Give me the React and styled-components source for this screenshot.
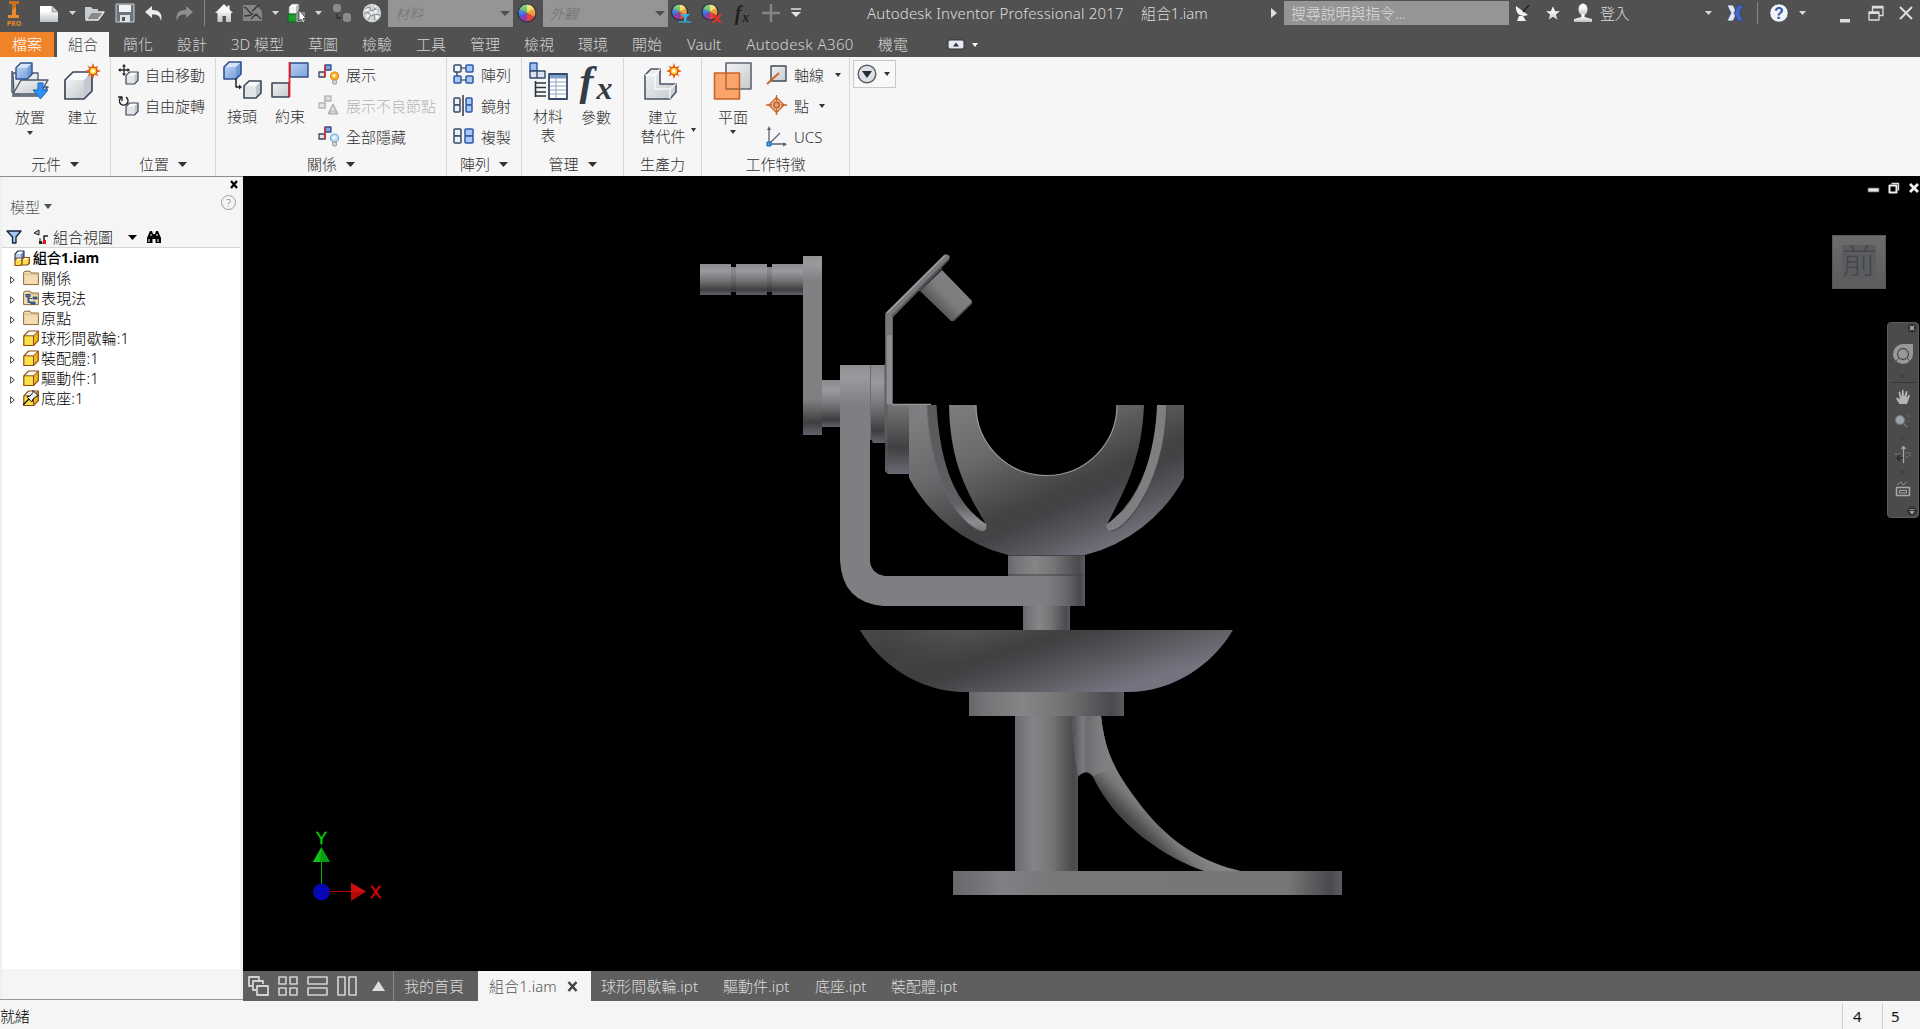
import React from 'react';
import styled, { createGlobalStyle } from 'styled-components';

const Global = createGlobalStyle`
  html, body { margin: 0; padding: 0; height: 100%; overflow: hidden; background: #f5f5f5; }
  *, *::before, *::after { box-sizing: border-box; }
  body { font-family: "Noto Sans", "Noto Sans CJK TC Light", "Noto Sans CJK TC", sans-serif; font-size: 15px; font-weight: 300; }
  svg { display: block; flex: none; }
`;

/* ---------- frame ---------- */
const Window = styled.div`
  width: 1920px; height: 1029px; display: flex; flex-direction: column; background: #f5f5f5; overflow: hidden;
`;
const TitleBar = styled.header`
  height: 28px; flex: none; display: flex; align-items: flex-start; background: #515151; color: #dcdcdc;
`;
const Slot = styled.div`
  width: ${(p) => p.$w}px; height: 26px; margin-left: ${(p) => p.$ml || 0}px; flex: none;
  display: flex; align-items: center; justify-content: center;
`;
const BarDivider = styled.div`
  width: 1px; height: ${(p) => p.$h || 26}px; margin-left: ${(p) => p.$ml}px; margin-top: ${(p) => p.$mt || 0}px; background: #858585; flex: none;
`;
const Combo = styled.div`
  width: ${(p) => p.$w}px; height: 27px; margin-left: ${(p) => p.$ml}px; padding: 0 3px 0 7px; background: #959595; color: #717171;
  display: flex; align-items: center; justify-content: space-between; font-style: italic; font-size: 14px; line-height: 26px; flex: none;
`;
const Caption = styled.div`
  width: ${(p) => p.$w}px; margin-left: ${(p) => p.$ml}px; line-height: 27px; height: 27px; font-size: 15px; color: #dedede;
  letter-spacing: ${(p) => p.$ls || 0}px; white-space: nowrap; flex: none;
`;
const Search = styled.div`
  width: 225px; height: 24px; margin: 1px 0 0 7px; padding-left: 7px; background: #959595; color: #dedede; font-size: 15px; line-height: 24px;
  white-space: nowrap; flex: none; letter-spacing: -0.15px;
`;
const TabBar = styled.nav`
  height: 29px; flex: none; display: flex; align-items: flex-end; background: #515151; color: #d4d4d4;
`;
const Tab = styled.div`
  width: ${(p) => p.$w}px; height: 25px; flex: none; text-align: center; line-height: 25px; white-space: nowrap;
  letter-spacing: ${(p) => p.$ls || 0}px;
  margin-left: ${(p) => p.$ml || 0}px;
  background: ${(p) => (p.$kind === 'file' ? '#f08228' : p.$kind === 'active' ? '#f6f6f6' : 'transparent')};
  color: ${(p) => (p.$kind === 'file' ? '#fff' : p.$kind === 'active' ? '#444' : 'inherit')};
`;
const TabTools = styled.div`
  height: 25px; display: flex; align-items: center; gap: 7px; margin-left: 27px;
`;

/* ---------- ribbon ---------- */
const Ribbon = styled.section`
  height: 119px; flex: none; display: flex; background: #f6f6f6; padding-top: 1px; color: #303030;
`;
const Panel = styled.div`
  width: ${(p) => p.$w}px; height: 118px; flex: none; display: flex; flex-direction: column; border-right: 1px solid #d6d6d6;
`;
const PanelBody = styled.div`
  height: 95px; display: flex; padding-left: ${(p) => p.$pl || 0}px;
`;
const PanelTitle = styled.div`
  height: 22px; display: flex; align-items: center; justify-content: center; gap: 9px; line-height: 20px;
`;
const Big = styled.div`
  width: ${(p) => p.$w}px; flex: none; padding-top: 3px; display: flex; flex-direction: column; align-items: center;
`;
const BigLabel = styled.div`
  margin-top: ${(p) => p.$mt || 5}px; line-height: ${(p) => p.$lh || 20}px; text-align: center; white-space: pre; color: #303030;
`;
const BigCaret = styled.div`
  margin-top: ${(p) => p.$mt}px;
`;
const Column = styled.div`
  display: flex; flex-direction: column; padding: 1px 0 0 ${(p) => p.$pl || 0}px;
`;
const Command = styled.div`
  height: 31px; display: flex; align-items: center; gap: ${(p) => p.$gap || 7}px; line-height: 20px; white-space: nowrap;
  color: ${(p) => (p.$off ? '#b4b4b4' : '#303030')};
`;
const TailCaret = styled.div`margin-left: ${(p) => p.$ml}px;`;
const DropButton = styled.div`
  width: 43px; height: 28px; margin: 2px 0 0 3px; border: 1px solid #c8c8c8; background: #f8f8f8;
  display: flex; align-items: center; justify-content: space-between; padding: 0 5px 0 3px;
`;

/* ---------- browser ---------- */
const Main = styled.main`flex: 1; display: flex; min-height: 0;`;
const Browser = styled.aside`
  width: 243px; height: 824px; flex: none; display: flex; flex-direction: column; padding: 0 3px 0 2px; background: #efefef;
  border-top: 1px solid #8f8f8f; border-bottom: 1px solid #999;
`;
const BrowserHead = styled.div`
  height: 71px; flex: none; background: #f5f5f5; border-bottom: 1px solid #d6d6d6; display: flex; flex-direction: column;
`;
const CloseLine = styled.div`height: 14px; flex: none; padding: 3px 2px 0 0; display: flex; justify-content: flex-end;`;
const ModelLine = styled.div`
  height: 30px; flex: none; padding: 0 4px 0 8px; display: flex; align-items: center; color: #555;
`;
const HelpMark = styled.div`
  margin: -7px 0 0 auto; width: 15px; height: 15px; border: 1px solid #9b9b9b; border-radius: 50%; font-size: 11px; line-height: 13px; text-align: center; color: #808080;
`;
const FilterLine = styled.div`
  height: 20px; margin-top: 6px; flex: none; padding-left: 4px; display: flex; align-items: center; color: #222; line-height: 20px;
`;
const Gap = styled.div`width: ${(p) => p.$w}px; flex: none;`;
const Tree = styled.div`height: 721px; background: #fff; color: #000;`;
const TreeRow = styled.div`
  height: 20px; display: flex; align-items: center; line-height: 20px;
  font-weight: ${(p) => (p.$root ? 700 : 300)}; font-size: ${(p) => (p.$root ? 14 : 15)}px;
  padding-left: ${(p) => (p.$root ? 12 : 8)}px; gap: ${(p) => (p.$root ? 3 : 0)}px; letter-spacing: ${(p) => (p.$root ? 0 : 0.15)}px;
`;
const Twist = styled.div`width: 13px; flex: none; padding-top: 3px;`;
const NodeIcon = styled.div`width: 18px; flex: none;`;
const BrowserFoot = styled.div`flex: 1; background: #f5f5f5;`;

/* ---------- viewport ---------- */
const Work = styled.section`flex: 1; display: flex; flex-direction: column;`;
const Canvas = styled.div`position: relative; height: 795px; background: #000; overflow: hidden;`;
const Model = styled.svg`position: absolute; left: 0; top: 0;`;
const ChildControls = styled.div`
  position: absolute; right: 0; top: 6px; display: flex; align-items: center; gap: 8px;
`;
const ViewCube = styled.div`
  position: absolute; right: 34px; top: 59px; width: 54px; height: 54px; border: 1px solid #565656;
  background: linear-gradient(#6c6c6c, #5c5c5c); display: flex; align-items: center; justify-content: center;
`;
const CubeFace = styled.div`
  width: 34px; height: 34px; background: #5b5c5d; color: #44464c; font-size: 33px; line-height: 32px; text-align: center; font-weight: 300;
  display: flex; justify-content: center;
`;
const NavBar = styled.div`
  position: absolute; right: 1px; top: 146px; width: 32px; height: 196px; border: 1px solid #5c5c5c; border-radius: 4px; background: #4b4b4b;
`;
const DocBar = styled.div`
  height: 30px; flex: none; background: #5f5f5f; display: flex; color: #dcdcdc; line-height: 29px;
`;
const ViewButtons = styled.div`
  width: 151px; display: flex; align-items: center; padding-left: 5px; gap: 9px; border-right: 1px solid #8a8a8a; flex: none;
`;
const RaiseButton = styled.div`margin-left: 6px;`;
const DocTab = styled.div`
  width: ${(p) => p.$w}px; padding-left: ${(p) => p.$pl}px; flex: none; white-space: nowrap; display: flex; align-items: center;
  letter-spacing: ${(p) => p.$ls || 0}px;
  background: ${(p) => (p.$on ? '#f5f5f5' : 'transparent')}; color: ${(p) => (p.$on ? '#555' : 'inherit')};
  gap: 10px;
`;
const Status = styled.footer`
  height: 28px; flex: none; background: #f5f5f5; display: flex; align-items: stretch; color: #111; line-height: 30px; font-size: 15px;
`;
const StatusText = styled.div`flex: 1; letter-spacing: -0.2px; color: #000;`;
const Count = styled.div`
  width: ${(p) => p.$w}px; margin-top: 2px; border-left: 1px solid #cfcfcf; padding-left: ${(p) => p.$pl}px; line-height: 27px; font-weight: 400;
`;

/* ---------- icons ---------- */
const Caret = ({ w = 6, h = 4, c = '#333' }) => (
  <svg width={w} height={h} viewBox="0 0 10 6" preserveAspectRatio="none"><path d="M0 0H10L5 6Z" fill={c} /></svg>
);
const Ico = ({ w, h = w, children }) => (
  <svg width={w} height={h} viewBox={`0 0 ${w} ${h}`} fill="none" strokeLinejoin="round">{children}</svg>
);
const Cube = ({ x, y, s, d = s * 0.3, f = '#e2e5e8', t = '#f8f9fa', e = '#c3c8ce', k = '#3a4658', sw = 1.4 }) => (
  <g stroke={k} strokeWidth={sw} strokeLinejoin="round">
    <path d={`M${x} ${y + d}L${x + d} ${y}H${x + s}L${x + s - d} ${y + d}Z`} fill={t} stroke="none" />
    <path d={`M${x + s - d} ${y + d}L${x + s} ${y}V${y + s - d}L${x + s - d} ${y + s}Z`} fill={e} stroke="none" />
    <rect x={x} y={y + d} width={s - d} height={s - d} fill={f} stroke="none" />
    <path d={`M${x} ${y + d}L${x + d} ${y}H${x + s}V${y + s - d}L${x + s - d} ${y + s}H${x}Z`} fill="none" />
  </g>
);
const blue = { f: 'url(#blueFace)', t: '#d5e4f7', e: '#6f9ad3', k: '#2c4f8c' };
const Spark = ({ x, y }) => (
  <g transform={`translate(${x} ${y})`}>
    <path d="M0-8L1.700-3.600L5.500-5.500L3.600-1.700L8 0L3.600 1.700L5.500 5.500L1.700 3.600L0 8L-1.700 3.600L-5.500 5.500L-3.600 1.700L-8 0L-3.600-1.700L-5.500-5.500L-1.700-3.600Z" fill="#e8611a" />
    <circle r="4" fill="#ffd21f" stroke="#d8431a" /><circle r="1.8" fill="#fff" />
  </g>
);
const Wheel = ({ r = 9, cx = 10, cy = 10 }) => {
  const cols = ['#f4d43a', '#f0922e', '#e2413c', '#8b3fae', '#3d6fe0', '#49b548'];
  return (
    <g>
      {cols.map((c, i) => {
        const a = ((i * 60 - 90) * Math.PI) / 180, b = ((i * 60 - 30) * Math.PI) / 180;
        return <path key={c} fill={c} d={`M${cx} ${cy}L${cx + r * Math.cos(a)} ${cy + r * Math.sin(a)}A${r} ${r} 0 0 1 ${cx + r * Math.cos(b)} ${cy + r * Math.sin(b)}Z`} />;
      })}
      <circle cx={cx} cy={cy} r={r} stroke="#26323e" strokeWidth="1.2" fill="url(#gloss)" />
    </g>
  );
};
const FxBox = styled.div`
  width: ${(p) => p.$w}px; height: ${(p) => p.$h}px; display: flex; justify-content: center; align-items: center;
  font-family: "Liberation Serif", serif; font-style: italic; font-weight: 700; color: ${(p) => p.$c}; line-height: ${(p) => p.$h}px;
`;
const FxF = styled.span`font-size: ${(p) => p.$s}px;`;
const FxX = styled.span`font-size: ${(p) => p.$s}px; margin-top: ${(p) => p.$mt}px; margin-left: ${(p) => p.$ml}px;`;
const PlaceIcon = () => (
  <Ico w={40}>
    <path d="M2 10V31L8 33L10 26H38L30 35H2" fill="#c9cdd3" stroke="#4b5668" strokeWidth="1.5" />
    <path d="M3 12H28V20H11L4 33Z" fill="#e9ebee" stroke="#4b5668" strokeWidth="1.3" />
    <path d="M11 19H38L30 33H3Z" fill="url(#greyFace)" stroke="#4b5668" strokeWidth="1.4" />
    <Cube x={6} y={2} s={16} {...blue} />
    <path d="M28 22H33V29H38L30.500 38L23 29H28Z" fill="#2f93f5" stroke="#1b62b8" />
  </Ico>
);
const CreateIcon = () => (
  <Ico w={40}><Cube x={2} y={11} s={27} d={8} f="url(#greyFace)" sw={1.7} /><Spark x={30} y={10} /></Ico>
);
const MoveIcon = () => (
  <Ico w={21}>
    <path d="M6 1V11M1 6H11" stroke="#222" strokeWidth="1.3" /><path d="M6 0L4 2.500H8ZM6 12L4 9.500H8ZM0 6L2.500 4V8ZM12 6L9.500 4V8Z" fill="#222" />
    <Cube x={8} y={8} s={12} sw={1.2} />
  </Ico>
);
const RotateIcon = () => (
  <Ico w={21}><path d="M3 2.500A4.300 4.300 0 1 0 8 2.200M0 2H4V6" stroke="#222" strokeWidth="1.4" /><Cube x={8} y={8} s={12} sw={1.2} /></Ico>
);
const JointIcon = () => (
  <Ico w={40}>
    <Cube x={2} y={1} s={17} d={5} {...blue} sw={1.6} />
    <path d="M14 17V26H18" stroke="#222" strokeWidth="1.500" /><path d="M20 26L17 23.500V28.500Z" fill="#222" /><circle cx="23" cy="25.500" r="1" fill="#222" />
    <Cube x={22} y={20} s={17} d={5} sw={1.6} />
  </Ico>
);
const ConstrainIcon = () => (
  <Ico w={40}>
    <rect x="20" y="2" width="18" height="14" fill="url(#blueFace)" stroke="#2c4f8c" strokeWidth="1.4" />
    <rect x="2" y="22" width="17" height="14" fill="url(#greyFace)" stroke="#3a4658" strokeWidth="1.6" />
    <path d="M19.500 1V36" stroke="#e81c24" strokeWidth="1.8" />
  </Ico>
);
const Bulb = ({ c, k }) => (
  <g><circle cx="16.500" cy="12" r="4" fill={c} stroke={k} strokeWidth="1.2" /><circle cx="16" cy="11.500" r="1.6" fill="#fff" opacity=".8" /><rect x="14.600" y="16" width="4" height="4" rx="1" fill="#d6d6d6" stroke="#8a8a8a" strokeWidth=".8" /></g>
);
const ShowIcon = ({ kind }) => {
  const g = kind === 'sick';
  return (
    <Ico w={21}>
      <rect x="7" y="1" width="6" height="5" fill={g ? '#ddd' : '#7fa6dc'} stroke={g ? '#b5b5b5' : '#2c4f8c'} strokeWidth="1.3" />
      <rect x="1" y="8" width="6" height="5" fill={g ? '#e5e5e5' : '#dfe2e6'} stroke={g ? '#b5b5b5' : '#3a4658'} strokeWidth="1.3" />
      <path d="M7 1V13" stroke={g ? '#bbb' : '#e81c24'} strokeWidth="1.4" />
      {g ? <path d="M15 9L20 19H10Z" fill="#c4c4c4" stroke="#aaa" /> : null}
      {g ? <path d="M15 12.500V15.500M15 17V18" stroke="#fff" strokeWidth="1.3" /> : null}
      {kind === 'show' ? <Bulb c="#ffb52b" k="#d98a12" /> : null}
      {kind === 'hide' ? <Bulb c="#bfe0fb" k="#74a9d6" /> : null}
    </Ico>
  );
};
const B = ({ x, y, w = 7, h = 7, on }) => (
  <rect x={x} y={y} width={w} height={h} rx="1" fill={on ? '#a9c8f2' : '#eef1f5'} stroke={on ? '#2b57a8' : '#34496b'} strokeWidth="1.5" />
);
const PatternIcon = () => (
  <Ico w={21}><path d="M4 4H17M4 16H17M4 4V17" stroke="#222" strokeWidth="1.2" /><B x={1} y={1} /><B x={13} y={1} on /><B x={1} y={12} on /><B x={13} y={12} on /></Ico>
);
const MirrorIcon = () => (
  <Ico w={21}><B x={1} y={3} h={7} w={6} /><B x={1} y={10} h={7} w={6} /><B x={13} y={3} w={6} on /><B x={13} y={10} w={6} on /><path d="M10 0V21" stroke="#333" strokeWidth="1.5" /></Ico>
);
const CopyIcon = () => (
  <Ico w={21}><B x={1} y={3} w={7} h={7} /><B x={1} y={10} w={7} h={7} /><B x={12} y={3} w={8} h={7} on /><B x={12} y={10} w={8} h={7} on /></Ico>
);
const BomIcon = () => (
  <Ico w={40}>
    <rect x="2" y="2" width="7" height="8" fill="#9fc0ee" stroke="#2b57a8" strokeWidth="1.4" />
    <path d="M2 10H9V17H2ZM9 10H17V17H9Z" fill="#d9e5f5" stroke="#34496b" strokeWidth="1.4" />
    <path d="M7.500 20V36M7.500 22H18M7.500 26.500H18M7.500 31H18M7.500 35H18" stroke="#2c3440" strokeWidth="1.6" />
    <rect x="21" y="13" width="18" height="25" fill="#fff" stroke="#34496b" strokeWidth="1.8" /><rect x="22" y="14" width="16" height="3.500" fill="#7f9dc9" />
    <path d="M22 21H38M22 25H38M22 29H38M22 33H38M28 17V37" stroke="#8ca3c4" />
  </Ico>
);
const SubstIcon = () => (
  <Ico w={40}>
    <path d="M2 14L8 8H17V23H33V31L27 38H2Z" fill="url(#greyFace)" stroke="#4b5668" strokeWidth="1.6" />
    <path d="M2 14H12L17 8M12 14V28H27L33 23M27 28V38" stroke="#fff" strokeWidth="1.4" opacity=".8" />
    <Spark x={31} y={10} />
  </Ico>
);
const PlaneIcon = () => (
  <Ico w={40}>
    <rect x="13" y="2" width="25" height="26" fill="url(#greyFace)" stroke="#5d6570" strokeWidth="1.6" />
    <rect x="1.500" y="12" width="25" height="26" fill="#fba46a" stroke="#c8642a" strokeWidth="1.6" />
    <path d="M13 12V28H26" stroke="#9c6138" strokeWidth="1.3" />
  </Ico>
);
const AxisIcon = () => (
  <Ico w={21}><rect x="5" y="2" width="15" height="15" fill="url(#greyFace)" stroke="#3f4a59" strokeWidth="1.4" /><path d="M1 20L13 9" stroke="#c8642a" strokeWidth="1.9" /></Ico>
);
const PointIcon = () => (
  <Ico w={21}><path d="M10.500 2.500L18 10L10.500 17.500L3 10Z" fill="#f8c39b" stroke="#c8642a" strokeWidth="1.3" /><path d="M10.500 0V6M10.500 14V20M0 10H6M15 10H21" stroke="#c8642a" strokeWidth="1.3" /><circle cx="10.500" cy="10" r="2.800" fill="#f0a06c" stroke="#a84f1c" strokeWidth="1.2" /></Ico>
);
const UcsIcon = () => (
  <Ico w={21}><path d="M3 18V2M3 18H20M3 18L14 7" stroke="#5b6470" strokeWidth="1.3" /><path d="M3 0L1 4H5ZM21 18.500L17 16.500V20.500Z" fill="#5b6470" /><rect x="1" y="16" width="4" height="4" fill="#3f9bf0" stroke="#1b62b8" /></Ico>
);
const TreeIcon = ({ kind }) => {
  if (kind === 'folder' || kind === 'views') {
    return (
      <Ico w={16}>
        <path d="M.6 14.600V2.500L2 1.200H7L8 3H15.400V14.600Z" fill="#f4dcb1" stroke="#8a6b3c" /><path d="M1 4.200H15" stroke="#c9a872" strokeWidth=".7" />
        {kind === 'views' ? <path d="M3 4.500H7V7H3ZM10 7H14V9H10ZM8 12H12V14H8ZM5 7V12.500H8M5 8.500H9" fill="#3f7fd0" stroke="#1d3557" strokeWidth=".8" /> : null}
      </Ico>
    );
  }
  return (
    <Ico w={16}>
      <Cube x={0.8} y={1} s={14.5} d={4.8} f="#fbe04a" t="#fff" e="#edb91f" k="#8f4a10" sw={1.2} />
      <path d="M1 5.800H10.500L15 1.200M10.500 5.800V15" stroke="#8f4a10" />
      {kind === 'pinned' ? <g><path d="M0 15L6 9" stroke="#111" strokeWidth="1.3" /><path d="M4 7L9 12L10 9L14 6L15.500 6L10 .5V2.500L7 6Z" fill="#eee" stroke="#111" /></g> : null}
    </Ico>
  );
};
const AssemblyIcon = () => (
  <Ico w={16}>
    <Cube x={1} y={1} s={9} d={3} f="#b7d0f0" t="#fff" e="#5f87c4" k="#1b2d4d" sw={1.1} />
    <Cube x={1} y={8} s={7.5} d={2} f="#ffe04a" t="#fff" e="#e8b31f" k="#8f4a10" sw={1.2} />
    <Cube x={8} y={7.5} s={7.5} d={2} f="#ffe04a" t="#fff" e="#e8b31f" k="#8f4a10" sw={1.2} />
  </Ico>
);

const Defs = () => (
  <defs>
    <linearGradient id="blueFace" x1="0" y1="0" x2="1" y2="1"><stop offset="0" stopColor="#b8d0f0" /><stop offset="1" stopColor="#7ba3dc" /></linearGradient>
    <linearGradient id="greyFace" x1="0" y1="0" x2="1" y2="1"><stop offset="0" stopColor="#f2f3f4" /><stop offset="1" stopColor="#c6c9cd" /></linearGradient>
    <linearGradient id="gloss" x1="0" y1="0" x2="0" y2="1"><stop offset="0" stopColor="#fff" stopOpacity=".45" /><stop offset=".6" stopColor="#fff" stopOpacity="0" /></linearGradient>
    <linearGradient id="lit" x1="0" y1="0" x2="0" y2="1"><stop offset=".3" stopColor="#fff" /><stop offset="1" stopColor="#b9c0c6" /></linearGradient>
  </defs>
);

/* ---------- assembly drawing, coordinates in window pixels ---------- */
const Assembly = () => (
  <Model width="1677" height="795" viewBox="243 176 1677 795">
    <defs>
      <linearGradient id="rod" x1="0" y1="0" x2="0" y2="1">
        <stop offset="0" stopColor="#8b8b8e" /><stop offset=".22" stopColor="#9b9b9f" /><stop offset=".5" stopColor="#78797b" /><stop offset=".84" stopColor="#3e3e40" /><stop offset="1" stopColor="#62626c" />
      </linearGradient>
      <linearGradient id="crank" x1="0" y1="0" x2="0" y2="1">
        <stop offset="0" stopColor="#949496" /><stop offset=".05" stopColor="#9a9a9d" /><stop offset=".14" stopColor="#7f8082" /><stop offset=".8" stopColor="#7f8082" /><stop offset=".93" stopColor="#3f3f42" /><stop offset="1" stopColor="#62626c" />
      </linearGradient>
      <linearGradient id="post" x1="0" y1="0" x2="1" y2="0">
        <stop offset="0" stopColor="#67676b" /><stop offset=".1" stopColor="#747477" /><stop offset=".35" stopColor="#858587" /><stop offset=".6" stopColor="#747476" /><stop offset=".92" stopColor="#4a4a4e" /><stop offset="1" stopColor="#5b5b63" />
      </linearGradient>
      <linearGradient id="brk" x1="0" y1="365" x2="0" y2="405" gradientUnits="userSpaceOnUse">
        <stop offset="0" stopColor="#8f8f92" /><stop offset=".3" stopColor="#9a9a9e" /><stop offset="1" stopColor="#7f7e83" />
      </linearGradient>
      <linearGradient id="brkEnd" x1="1046" y1="0" x2="1085" y2="0" gradientUnits="userSpaceOnUse">
        <stop offset="0" stopColor="#7f7e83" /><stop offset=".5" stopColor="#69696c" /><stop offset=".88" stopColor="#49494d" /><stop offset="1" stopColor="#5b5b63" />
      </linearGradient>
      <linearGradient id="block" x1="0" y1="0" x2="0" y2="1">
        <stop offset="0" stopColor="#757577" /><stop offset=".62" stopColor="#404042" /><stop offset="1" stopColor="#6a6a74" />
      </linearGradient>
      <linearGradient id="bowlA" x1="1000" y1="382.600" x2="1078.700" y2="563.600" gradientUnits="userSpaceOnUse">
        <stop offset="0" stopColor="#7e7e80" /><stop offset=".3" stopColor="#6a6a6c" /><stop offset=".62" stopColor="#434345" /><stop offset=".7" stopColor="#434346" /><stop offset=".84" stopColor="#57585c" /><stop offset="1" stopColor="#747480" />
      </linearGradient>
      <linearGradient id="bowlB" x1="1000" y1="610" x2="1033" y2="716" gradientUnits="userSpaceOnUse">
        <stop offset="0" stopColor="#58585a" /><stop offset=".2" stopColor="#4a4a4c" /><stop offset=".36" stopColor="#404043" /><stop offset=".46" stopColor="#444447" /><stop offset=".72" stopColor="#5a5b5f" /><stop offset="1" stopColor="#747481" />
      </linearGradient>
      <radialGradient id="shadeB" cx="885" cy="655" r="90" gradientUnits="userSpaceOnUse">
        <stop offset="0" stopColor="#3d3d40" stopOpacity=".9" /><stop offset="1" stopColor="#3d3d40" stopOpacity="0" />
      </radialGradient>
      <linearGradient id="slotL" x1="0" y1="405" x2="0" y2="532" gradientUnits="userSpaceOnUse">
        <stop offset="0" stopColor="#5a5a5d" /><stop offset=".78" stopColor="#606064" /><stop offset=".92" stopColor="#8e8e91" /><stop offset="1" stopColor="#7a7a7c" />
      </linearGradient>
      <linearGradient id="base" x1="0" y1="0" x2="1" y2="0">
        <stop offset="0" stopColor="#68686b" /><stop offset=".13" stopColor="#808085" /><stop offset=".25" stopColor="#78787a" /><stop offset=".86" stopColor="#767677" /><stop offset=".97" stopColor="#4a4a4e" /><stop offset="1" stopColor="#5b5b63" />
      </linearGradient>
      <linearGradient id="column" x1="0" y1="0" x2="1" y2="0">
        <stop offset="0" stopColor="#6c6c70" /><stop offset=".3" stopColor="#858589" /><stop offset=".6" stopColor="#737375" /><stop offset=".93" stopColor="#49494c" /><stop offset="1" stopColor="#535357" />
      </linearGradient>
      <linearGradient id="rib" x1="1120" y1="830" x2="1150" y2="800" gradientUnits="userSpaceOnUse">
        <stop offset="0" stopColor="#5a5a5e" /><stop offset=".3" stopColor="#454548" /><stop offset=".7" stopColor="#78787a" /><stop offset="1" stopColor="#868689" />
      </linearGradient>
      <linearGradient id="ribTop" x1="1072" y1="0" x2="1108" y2="0" gradientUnits="userSpaceOnUse">
        <stop offset="0" stopColor="#4f4f52" /><stop offset=".18" stopColor="#6b6b6e" /><stop offset=".3" stopColor="#7b7b7f" /><stop offset=".42" stopColor="#6c6c70" /><stop offset=".7" stopColor="#7b7b7d" /><stop offset="1" stopColor="#808083" />
      </linearGradient>
      <linearGradient id="pin" x1="925" y1="297" x2="958" y2="266" gradientUnits="userSpaceOnUse">
        <stop offset="0" stopColor="#545457" /><stop offset=".35" stopColor="#7c7c7f" /><stop offset=".7" stopColor="#808083" /><stop offset="1" stopColor="#5b5b5e" />
      </linearGradient>
    </defs>

    <rect x="700" y="264" width="103" height="31" fill="url(#rod)" />
    <path d="M731 263H736V267H731ZM731 292H736V296H731ZM767 263H772V267H767ZM767 292H772V296H767Z" fill="#000" />
    <rect x="731" y="267" width="5" height="25" fill="#000" opacity=".1" /><rect x="767" y="267" width="5" height="25" fill="#000" opacity=".1" />
    <rect x="822" y="380" width="18" height="47" fill="url(#rod)" />
    <rect x="803" y="256" width="19" height="179" fill="url(#crank)" />

    <path d="M871 365H885V443H873L871 439Z" fill="url(#rod)" />
    <path d="M870.500 365V440" stroke="#6d6d70" />
    <rect x="888" y="405" width="21" height="69" fill="url(#block)" />
    <path d="M885 404H893V474H888L885 471Z" fill="url(#block)" />
    <path d="M885 364V443M887 404V472" stroke="#5a5a5d" strokeWidth="1" />
    <path d="M885.500 313L893 316V404H885.500Z" fill="#8f8f93" />
    <path d="M885.500 335V313L893 316V335Z" fill="#77777a" />
    <path d="M886 335V440M892.500 317V404" stroke="#626265" />
    <path d="M920 291L942 270L972 301L971 304L954 321L951 321Z" fill="url(#pin)" />
    <path d="M972 303L953 321" stroke="#4c4c50" strokeWidth="1.5" />
    <path d="M885.500 313L944 255Q947 253 949.500 256Q950 259 948 261L893 317Z" fill="#77777a" />
    <path d="M887 313L945 255.500" stroke="#a0a0a4" strokeWidth="1.6" />
    <path d="M892 316L948 260M919 291L942 268" stroke="#4e4e52" strokeWidth="1.2" />
    <path d="M892 404.500H931" stroke="#97979a" strokeWidth="1.300" />

    <path d="M909 405H976A70.500 70.500 0 0 0 1117 405H1184V478A156 156 0 0 1 1085 555H1008A156 156 0 0 1 909 478Z" fill="url(#bowlA)" />
    <path d="M976 405A70.500 70.500 0 0 0 1117 405" fill="none" stroke="#98989b" strokeWidth="1.2" />
    <path d="M927 405H937L940 440L951 480L975 514L986 523Q988 531 982 531Q970 528 956 510Q930 470 927 405Z" fill="url(#slotL)" />
    <path d="M936.500 405H949C950 455 962 485 986 524C955 503 940 465 936.500 405Z" fill="#000" />
    <path d="M927 405Q930 470 956 510Q970 528 982 531" fill="none" stroke="#68686c" />
    <path d="M1157 405H1167Q1165 465 1138 507Q1122 530 1111 531Q1105 529 1106.500 524L1124 510Q1153 475 1157 405Z" fill="#7f7f82" />
    <path d="M1144 405H1157C1155 455 1140 500 1107 524C1128 485 1142 455 1144 405Z" fill="#000" />
    <path d="M1167 405Q1165 465 1138 507Q1122 530 1111 531" fill="none" stroke="#4a4a4d" strokeWidth="1.2" />

    <rect x="1008" y="555" width="77" height="21" fill="url(#post)" />
    <path d="M1008 555.500H1085M1008 575H1085" stroke="#434346" />
    <path d="M840 365H870V562Q872 574 885 576H1085V606H884Q842 603 840 560Z" fill="url(#brk)" />
    <rect x="1046" y="576" width="39" height="30" fill="url(#brkEnd)" />
    <rect x="1023" y="606" width="47" height="24" fill="url(#post)" />
    <path d="M860 630C880 664 919 692 965 692H1128C1174 692 1213 664 1233 630Z" fill="url(#bowlB)" />
    <path d="M860 630C880 664 919 692 965 692H1128C1174 692 1213 664 1233 630Z" fill="url(#shadeB)" />
    <rect x="969" y="692" width="155" height="24" fill="url(#post)" />
    <rect x="1015" y="716" width="63" height="155" fill="url(#column)" />
    <path d="M1072 716H1101C1105 755 1118 777 1147 813C1172 843 1204 863 1241 871H1204C1168 859 1116 826 1093 777Q1087 768 1078 777Q1073 750 1072 716Z" fill="url(#rib)" />
    <path d="M1072 716H1101C1104 740 1108 752 1114 766L1093 776Q1087 768 1078 776Q1073 750 1072 716Z" fill="url(#ribTop)" />
    <rect x="953" y="871" width="389" height="24" fill="url(#base)" />

    <path d="M321.500 888V861" stroke="#00b400" /><path d="M321.500 847L313 862H330Z" fill="#0a9c10" /><path d="M321.500 847L320 862H313Z" fill="#10c018" />
    <path d="M326 891.500H352" stroke="#c00000" /><path d="M351 883L366 891.500L351 901Z" fill="#b80808" /><path d="M351 883L366 891.500L351 892Z" fill="#d01010" />
    <circle cx="321.500" cy="892" r="8.500" fill="#0808a8" />
    <text x="321.500" y="897.500" textAnchor="middle" fontFamily="Liberation Sans, sans-serif" fontSize="15" fill="#0000e8">Z</text>
    <text x="321.500" y="844" textAnchor="middle" fontFamily="Liberation Sans, sans-serif" fontSize="17" fill="#00d800" stroke="#00d800" strokeWidth=".3">Y</text>
    <text x="375.500" y="898" textAnchor="middle" fontFamily="Liberation Sans, sans-serif" fontSize="17" fill="#e80000" stroke="#e80000" strokeWidth=".3">X</text>
  </Model>
);

const NavTools = () => (
  <Ico w={30} h={194}>
    <circle cx="24" cy="5" r="4.500" fill="#303030" /><path d="M22 3L26 7M26 3L22 7" stroke="#bbb" strokeWidth="1.2" />
    <path d="M5 31A10 10 0 0 1 15 21H25V31A10 10 0 0 1 5 31Z" fill="#989898" />
    <circle cx="15" cy="31" r="5.500" stroke="#4d4d4d" strokeWidth="1.3" /><path d="M11 35L8 38M19 35L22 38" stroke="#4d4d4d" />
    <path d="M12 52H18L15 55Z M12 114H18L15 117ZM12 148H18L15 151Z" fill="#3c3f46" /><path d="M2 59.500H28" stroke="#383838" />
    <path d="M11.500 81L8 75.500L9.500 74.500L12 76.500L10.500 69L12 68.500L13.500 74L14 67H15.500L16 74L18 68L19.500 68.500L18.500 75L21 71.500L22 72.500L19 81Z" fill="#b5b5b5" />
    <circle cx="12" cy="97" r="4.500" fill="#9aa3a5" stroke="#727b7d" /><path d="M15 100L19 104" stroke="#777" strokeWidth="1.600" /><path d="M18 93H23M20.500 90.500V95.500M18 98H23" stroke="#5b5b5b" />
    <path d="M15.500 124V140M13.500 126L15.500 123.500L17.500 126" stroke="#a5a5a5" strokeWidth="1.3" /><path d="M7 131H13M18 134Q23 134 22 130Q20 128 18 131" stroke="#8c8c8c" strokeDasharray="2 1" /><path d="M9 135H15M12 132L9 135L12 138" stroke="#2b2b2b" strokeWidth="1.500" />
    <path d="M8.500 164.500H21.500V172.500H8.500Z" stroke="#a8a8a8" strokeWidth="1.500" /><path d="M11.500 167.500H18.500V170H11.500Z" stroke="#a8a8a8" /><path d="M9 162L13 159L15 162L19 159" stroke="#8f8f8f" />
    <circle cx="24" cy="188" r="4.500" fill="#303030" /><path d="M21.500 186.500H26.500M22 188.500H26L24 191Z" stroke="#aaa" fill="#aaa" strokeWidth=".8" />
  </Ico>
);

const LightCaret = () => <Caret w={7} h={4} c="#d8d8d8" />;

const QuickAccess = () => (
  <>
    <Slot $w={22} $ml={3}>
      <svg width="22" height="28" viewBox="0 0 22 28"><Defs />
        <path d="M6 2H16V5H13V16H16V19H5V16H9V5H6Z" fill="#e98a2d" /><path d="M6 2H16V5H13V8L9 11V5H6Z" fill="#c8701e" />
        <text x="11" y="27" textAnchor="middle" fontFamily="Noto Sans, sans-serif" fontWeight="700" fontSize="7" fill="#e98a2d">PRO</text></svg>
    </Slot>
    <Slot $w={20} $ml={14}><Ico w={20}><path d="M1 3H13L19 9V19H1Z" fill="url(#lit)" /><path d="M13 3V9H19" fill="#c9cdd0" stroke="#8f9498" strokeWidth=".8" /></Ico></Slot>
    <Slot $w={7} $ml={10}><LightCaret /></Slot>
    <Slot $w={21} $ml={8}><Ico w={21}><path d="M1 17V4H7L9 6H14V8H7Z" fill="#c9cdd1" /><path d="M2 17L7 9H20L14 17Z" fill="#85898e" stroke="#e8eaec" strokeWidth="1.3" /></Ico></Slot>
    <Slot $w={20} $ml={10}><Ico w={20}><rect x="1" y="1" width="18" height="18" fill="#6b7580" stroke="#c7ccd1" /><rect x="4" y="2" width="12" height="7" fill="#f2f3f4" /><rect x="5" y="12" width="10" height="7" fill="#dfe1e3" /><rect x="7" y="14" width="3" height="4" fill="#4f5a66" /></Ico></Slot>
    <Slot $w={19} $ml={9}><Ico w={19}><path d="M8 2L1 8L8 14V10.500C14 10 16 12 17 17C19 10 15 5.500 8 6Z" fill="#e9ebec" /></Ico></Slot>
    <Slot $w={19} $ml={12}><Ico w={19}><path d="M11 2L18 8L11 14V10.500C5 10 3 12 2 17C0 10 4 5.500 11 6Z" fill="#8d8f91" /></Ico></Slot>
    <BarDivider $ml={10} />
    <Slot $w={20} $ml={9}><Ico w={20}><path d="M10 1L1 10H3.500V19H8.500V13H12V19H17V10H19L15.500 6.500V2.500H13.500V4.500Z" fill="url(#lit)" /></Ico></Slot>
    <Slot $w={22} $ml={8}><Ico w={22}><path d="M1 3H14L20 9V19H1Z" fill="#838587" /><path d="M2 5C6 6 6 10 9 11M10 9C13 8 12 5 18 3M2 14C6 13 8 15 11 11M9 17L14 12L19 17" stroke="#3c3c3c" strokeWidth="1.500" /></Ico></Slot>
    <Slot $w={7} $ml={8}><LightCaret /></Slot>
    <Slot $w={20} $ml={8}><Ico w={20}><Cube x={2} y={1} s={10} d={3} f="#f2f2f2" t="#fff" e="#bbb" k="#888" sw={0.6} /><rect x="1" y="11" width="9" height="8" fill="#1f9a2c" stroke="#0e6618" /><path d="M9 9H18V19H9Z" fill="#8b9490" /><path d="M12 7V18L14 16L16 20L17.500 19L16 15.500H19Z" fill="#fff" stroke="#222" strokeWidth=".7" /></Ico></Slot>
    <Slot $w={7} $ml={8}><LightCaret /></Slot>
    <Slot $w={20} $ml={10}><Ico w={20}><rect x="1" y="1" width="8" height="8" rx="3" fill="#8b8b8b" /><rect x="11" y="10" width="8" height="9" rx="3" fill="#8b8b8b" /><path d="M5 11V15H9" stroke="#2e2e2e" strokeWidth="1.300" /></Ico></Slot>
    <Slot $w={20} $ml={10}><Ico w={20}><circle cx="10" cy="10" r="9.200" fill="#d2d6d9" /><path d="M4 5L8 4L9 8L13 6L17 8M2 11L6 9L9 13L14 11L18 12M6 17L8 13M13 17L12 12M13 6L12 2M6 9L4 5" stroke="#7b8186" strokeWidth=".9" /><path d="M4 8L6 6M13 10L15 7M9 11L10 9M12 3L14 4M5 14L7 12M14 15L16 13" stroke="#fff" strokeWidth="1.900" /></Ico></Slot>
    <Combo $w={125} $ml={6}>材料<Caret w={10} h={5} c="#4f4f4f" /></Combo>
    <Slot $w={20} $ml={4}><Ico w={20}><Wheel /></Ico></Slot>
    <Combo $w={125} $ml={6}>外觀<Caret w={10} h={5} c="#4f4f4f" /></Combo>
    <Slot $w={20} $ml={3}><Ico w={20}><Wheel r={8} cx={8.5} cy={9} /><path d="M9 11H19L15.500 14.500V18H13V14.500Z" fill="#2fb6ea" /><path d="M8 19H20" stroke="#2fb6ea" strokeWidth="1.200" /></Ico></Slot>
    <Slot $w={21} $ml={10}><Ico w={21} h={20}><Wheel r={8} cx={9} cy={9} /><path d="M12 11L20 20M20 11L12 20" stroke="#e3322c" strokeWidth="2.200" /></Ico></Slot>
    <Slot $w={20} $ml={10}><FxBox $w={20} $h={24} $c="#1f1f1f"><FxF $s={20}>f</FxF><FxX $s={14} $mt={9} $ml={1}>x</FxX></FxBox></Slot>
    <Slot $w={18} $ml={10}><Ico w={18}><path d="M9 0V18M0 9H18" stroke="#858585" strokeWidth="2.500" /></Ico></Slot>
    <Slot $w={10} $ml={11}><Ico w={10} h={10}><path d="M0 1H10" stroke="#e0e0e0" strokeWidth="1.500" /><path d="M0 4H10L5 9Z" fill="#e0e0e0" /></Ico></Slot>
  </>
);

const tabs = [
  ['簡化', 54], ['設計', 54], ['3D 模型', 77], ['草圖', 54], ['檢驗', 54], ['工具', 54], ['管理', 54], ['檢視', 54],
  ['環境', 54], ['開始', 54], ['Vault', 60], ['Autodesk A360', 132], ['機電', 54],
];
const nodes = [
  ['folder', '關係'], ['views', '表現法'], ['folder', '原點'], ['part', '球形間歇輪:1'], ['part', '裝配體:1'], ['part', '驅動件:1'], ['pinned', '底座:1'],
];
const PTitle = ({ children, plain }) => (
  <PanelTitle>{children}{plain ? null : <Caret w={9} h={5} c="#333" />}</PanelTitle>
);

export default function App() {
  return (
    <Window>
      <Global />
      <TitleBar>
        <QuickAccess />
        <Caption $w={274} $ml={66} $ls={0.18}>Autodesk Inventor Professional 2017</Caption>
        <Caption $w={130} $ml={0} $ls={-0.1}>組合1.iam</Caption>
        <Slot $w={6} $ml={0}><Ico w={6} h={10}><path d="M0 0L6 5L0 10Z" fill="#e0e0e0" /></Ico></Slot>
        <Search>搜尋說明與指令...</Search>
        <Slot $w={18} $ml={5}><Ico w={18} h={20}><path d="M2 3Q1 12 10 13L14 12Z" fill="#f4f4f4" /><path d="M9 9L15 2" stroke="#222" strokeWidth="1.500" /><path d="M5 13L3 18H12L9 13Z" fill="#f4f4f4" /></Ico></Slot>
        <Slot $w={18} $ml={12}><Ico w={18}><path d="M9 1L11.300 6.800H17L12.500 10.500L14.300 17L9 13.300L3.700 17L5.500 10.500L1 6.800H6.700Z" fill="url(#lit)" stroke="#2e2e2e" strokeWidth=".7" /></Ico></Slot>
        <Slot $w={20} $ml={11}><Ico w={20}><ellipse cx="10" cy="6.500" rx="4.500" ry="6" fill="url(#lit)" /><path d="M8.500 11H11.500V14L19 16V19H1V16L8.500 14Z" fill="url(#lit)" /></Ico></Slot>
        <Caption $w={105} $ml={7} $ls={-0.5}>登入</Caption>
        <Slot $w={7} $ml={0}><LightCaret /></Slot>
        <Slot $w={18} $ml={14}><Ico w={18}><path d="M1 1H7L11 9L7 17H1L5 9Z" fill="#e4e8f0" stroke="#30457f" strokeWidth=".7" /><path d="M17 1H12L8 9L12 17H17L13.500 9Z" fill="#4268c4" stroke="#2a3f80" strokeWidth=".7" /></Ico></Slot>
        <BarDivider $ml={13} $h={22} $mt={2} />
        <Slot $w={20} $ml={11}><svg width="20" height="20" viewBox="0 0 20 20"><circle cx="10" cy="10" r="9.300" fill="#f4f5f7" stroke="#3a4350" /><text x="10" y="15.500" textAnchor="middle" fontFamily="Liberation Sans, sans-serif" fontWeight="700" fontSize="16" fill="#2c58b0">?</text></svg></Slot>
        <Slot $w={7} $ml={10}><LightCaret /></Slot>
        <Slot $w={10} $ml={34}><Ico w={10} h={20}><rect x="0" y="16" width="10" height="3.500" fill="#dedede" /></Ico></Slot>
        <Slot $w={16} $ml={18}><Ico w={16} h={16}><path d="M1 7H11V15H1ZM4.500 7V1.500H15V10.500H11" stroke="#dedede" strokeWidth="1.300" /><path d="M1 8H11M4.500 2.500H15" stroke="#dedede" strokeWidth="2" /></Ico></Slot>
        <Slot $w={14} $ml={15}><Ico w={14}><path d="M1 1L13 13M13 1L1 13" stroke="#dedede" strokeWidth="2" /></Ico></Slot>
      </TitleBar>
      <TabBar>
        <Tab $w={54} $kind="file">檔案</Tab>
        <Tab $w={52} $ml={3} $kind="active">組合</Tab>
        {tabs.map(([t, w], i) => <Tab key={t} $w={w} $ml={i === 0 ? 2 : 0} $ls={w === 132 ? 0.4 : 0}>{t}</Tab>)}
        <TabTools>
          <Ico w={18} h={11}><rect x="1" y="1" width="16" height="9" rx="2" fill="#e6e9ee" stroke="#2c3340" /><path d="M6 7.500H12L9 3.500Z" fill="#2c3340" /></Ico>
          <Caret w={6} h={4} c="#fff" />
        </TabTools>
      </TabBar>

      <Ribbon>
        <Panel $w={111}>
          <PanelBody $pl={4}>
            <Big $w={52}><PlaceIcon /><BigLabel $mt={6}>放置</BigLabel><BigCaret $mt={4}><Caret /></BigCaret></Big>
            <Big $w={53}><CreateIcon /><BigLabel $mt={6}>建立</BigLabel></Big>
          </PanelBody>
          <PTitle>元件</PTitle>
        </Panel>
        <Panel $w={105}>
          <PanelBody $pl={7}>
            <Column>
              <Command $gap={6}><MoveIcon />自由移動</Command>
              <Command $gap={6}><RotateIcon />自由旋轉</Command>
            </Column>
          </PanelBody>
          <PTitle>位置</PTitle>
        </Panel>
        <Panel $w={231}>
          <PanelBody $pl={2}>
            <Big $w={48}><JointIcon /><BigLabel>接頭</BigLabel></Big>
            <Big $w={48}><ConstrainIcon /><BigLabel>約束</BigLabel></Big>
            <Column $pl={4}>
              <Command><ShowIcon kind="show" />展示</Command>
              <Command $off><ShowIcon kind="sick" />展示不良節點</Command>
              <Command><ShowIcon kind="hide" />全部隱藏</Command>
            </Column>
          </PanelBody>
          <PTitle>關係</PTitle>
        </Panel>
        <Panel $w={75}>
          <PanelBody $pl={6}>
            <Column>
              <Command><PatternIcon />陣列</Command>
              <Command><MirrorIcon />鏡射</Command>
              <Command><CopyIcon />複製</Command>
            </Column>
          </PanelBody>
          <PTitle>陣列</PTitle>
        </Panel>
        <Panel $w={102}>
          <PanelBody $pl={2}>
            <Big $w={48}><BomIcon /><BigLabel $mt={6} $lh={19}>{'材料\n表'}</BigLabel></Big>
            <Big $w={48}><FxBox $w={40} $h={40} $c="#353c45"><FxF $s={42}>f</FxF><FxX $s={32} $mt={13} $ml={3}>x</FxX></FxBox><BigLabel $mt={6}>參數</BigLabel></Big>
          </PanelBody>
          <PTitle>管理</PTitle>
        </Panel>
        <Panel $w={78}>
          <PanelBody $pl={9}>
            <Big $w={60}><SubstIcon /><BigLabel $mt={7} $lh={19}>{'建立\n替代件'}</BigLabel></Big>
            <Big $w={1}><BigCaret $mt={67}><Caret w={5} /></BigCaret></Big>
          </PanelBody>
          <PTitle plain>生產力</PTitle>
        </Panel>
        <Panel $w={148}>
          <PanelBody $pl={4}>
            <Big $w={54}><PlaneIcon /><BigLabel $mt={6}>平面</BigLabel><BigCaret $mt={3}><Caret /></BigCaret></Big>
            <Column $pl={6}>
              <Command><AxisIcon />軸線<TailCaret $ml={4}><Caret /></TailCaret></Command>
              <Command><PointIcon />點<TailCaret $ml={3}><Caret /></TailCaret></Command>
              <Command><UcsIcon />UCS</Command>
            </Column>
          </PanelBody>
          <PTitle plain>工作特徵</PTitle>
        </Panel>
        <DropButton>
          <Ico w={20}><circle cx="10" cy="10" r="8.800" fill="#dfe2e5" stroke="#59616b" strokeWidth="1.500" /><path d="M5 7H15L10 14Z" fill="#222c38" /></Ico>
          <Caret w={6} />
        </DropButton>
      </Ribbon>

      <Main>
        <Browser>
          <BrowserHead>
            <CloseLine><Ico w={8} h={9}><path d="M1 1L7 8M7 1L1 8" stroke="#000" strokeWidth="2.200" /></Ico></CloseLine>
            <ModelLine>模型<Gap $w={4} /><Caret w={8} h={5} c="#555" /><HelpMark>?</HelpMark></ModelLine>
            <FilterLine>
              <Ico w={16} h={14}><path d="M1 1H15L10 7V13H6.500V7Z" fill="#a8c6ec" stroke="#14253f" strokeWidth="1.300" /></Ico>
              <Gap $w={11} />
              <Ico w={17} h={16}><path d="M1 4L6 1V6Z" fill="#bbb" stroke="#222" /><path d="M7 9V14H10" stroke="#222" /><rect x="6" y="12" width="3" height="3" fill="#222" /><path d="M11 14V7H15" stroke="#222" strokeWidth="1.500" /><rect x="10" y="11" width="3" height="4" fill="#e01515" /></Ico>
              <Gap $w={3} />組合視圖<Gap $w={15} /><Caret w={9} h={5} c="#000" /><Gap $w={9} />
              <Ico w={16} h={14}><path d="M1 8L4 1H6L7 4H9L10 1H12L15 8V13H9.500V9H6.500V13H1Z" fill="#000" /><path d="M3 9V12M12 9V12M5 4V6M11 4V6" stroke="#fff" /></Ico>
            </FilterLine>
          </BrowserHead>
          <Tree>
            <TreeRow $root><AssemblyIcon />組合1.iam</TreeRow>
            {nodes.map(([kind, label]) => (
              <TreeRow key={label}>
                <Twist><Ico w={5} h={8}><path d="M.6 .8L4.300 4L.6 7.200Z" stroke="#333" strokeWidth=".9" /></Ico></Twist>
                <NodeIcon><TreeIcon kind={kind} /></NodeIcon>{label}
              </TreeRow>
            ))}
          </Tree>
          <BrowserFoot />
        </Browser>
        <Work>
          <Canvas>
            <Assembly />
            <ChildControls>
              <Ico w={13} h={12}><rect x="1" y="6" width="11" height="4" fill="#e6e6e6" stroke="#555" strokeWidth=".8" /></Ico>
              <Ico w={12} h={12}><path d="M3.500 1.500H10.500V8.500" stroke="#ddd" strokeWidth="1.400" /><rect x="1.500" y="3.500" width="7" height="7" stroke="#eee" strokeWidth="2" /></Ico>
              <Ico w={12} h={12}><path d="M2 2L10 10M10 2L2 10" stroke="#eee" strokeWidth="2.800" /></Ico>
            </ChildControls>
            <ViewCube><CubeFace>前</CubeFace></ViewCube>
            <NavBar><NavTools /></NavBar>
          </Canvas>
          <DocBar>
            <ViewButtons>
              <Ico w={21} h={21}><path d="M4 10H1V1H11V4M8 14H5V5H15V8M9 10H20V19H9Z" stroke="#d4d4d4" strokeWidth="1.800" /></Ico>
              <Ico w={20} h={20}><path d="M1 1H8V8H1ZM12 1H19V8H12ZM1 12H8V19H1ZM12 12H19V19H12Z" stroke="#d4d4d4" strokeWidth="1.600" /></Ico>
              <Ico w={21} h={20}><path d="M1 1H20V8H1ZM1 12H20V19H1Z" stroke="#d4d4d4" strokeWidth="1.600" /></Ico>
              <Ico w={20} h={20}><path d="M1 1H8V19H1ZM12 1H19V19H12Z" stroke="#d4d4d4" strokeWidth="1.600" /></Ico>
              <RaiseButton><Ico w={13} h={10}><path d="M0 10L6.500 0L13 10Z" fill="#dedede" /></Ico></RaiseButton>
            </ViewButtons>
            <DocTab $w={84} $pl={10}>我的首頁</DocTab>
            <DocTab $w={113} $pl={11} $on $ls={0.1}>組合1.iam<Ico w={11} h={11}><path d="M1.500 1L9.500 10M9.500 1L1.500 10" stroke="#444" strokeWidth="2.500" /></Ico></DocTab>
            <DocTab $w={122} $pl={10} $ls={0.1}>球形間歇輪.ipt</DocTab>
            <DocTab $w={92} $pl={10}>驅動件.ipt</DocTab>
            <DocTab $w={76} $pl={10}>底座.ipt</DocTab>
            <DocTab $w={100} $pl={10}>裝配體.ipt</DocTab>
          </DocBar>
        </Work>
      </Main>
      <Status>
        <StatusText>就緒</StatusText>
        <Count $w={40} $pl={10}>4</Count>
        <Count $w={38} $pl={8}>5</Count>
      </Status>
    </Window>
  );
}
